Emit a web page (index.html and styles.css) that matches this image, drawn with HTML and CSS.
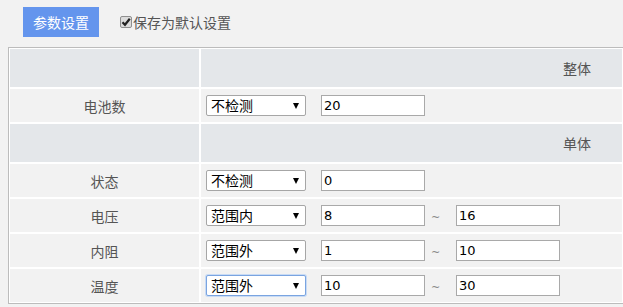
FILE: index.html
```html
<!DOCTYPE html>
<html lang="zh-CN">
<head>
<meta charset="utf-8">
<title>参数设置</title>
<link rel="stylesheet" href="styles.css">
</head>
<body>
<div class="toolbar">
  <button class="btn-primary" type="button">参数设置</button>
  <label class="check">
    <span class="check-box">
      <input type="checkbox" checked>
      <svg class="check-mark" viewBox="0 0 12 12" width="12" height="12"><path d="M2.5 6.2 L5 8.8 L9.8 2.8" fill="none" stroke="#222" stroke-width="2.2"/></svg>
    </span>保存为默认设置
  </label>
</div>
<table class="grid">
  <tr class="group">
    <td class="label-col"></td>
    <td class="group-title">整体</td>
  </tr>
  <tr class="row">
    <td class="label">电池数</td>
    <td class="field"><span class="sel"><select><option>不检测</option></select></span><input class="num" type="text" value="20"></td>
  </tr>
  <tr class="group">
    <td class="label-col"></td>
    <td class="group-title">单体</td>
  </tr>
  <tr class="row">
    <td class="label">状态</td>
    <td class="field"><span class="sel"><select><option>不检测</option></select></span><input class="num" type="text" value="0"></td>
  </tr>
  <tr class="row">
    <td class="label">电压</td>
    <td class="field"><span class="sel"><select><option>范围内</option></select></span><input class="num" type="text" value="8"><span class="tilde">~</span><input class="num" type="text" value="16"></td>
  </tr>
  <tr class="row">
    <td class="label">内阻</td>
    <td class="field"><span class="sel"><select><option>范围外</option></select></span><input class="num" type="text" value="1"><span class="tilde">~</span><input class="num" type="text" value="10"></td>
  </tr>
  <tr class="row">
    <td class="label">温度</td>
    <td class="field"><span class="sel sel-focus"><select><option>范围外</option></select></span><input class="num" type="text" value="10"><span class="tilde">~</span><input class="num" type="text" value="30"></td>
  </tr>
</table>
</body>
</html>
```
FILE: styles.css
```css
html, body {
  margin: 0;
  padding: 0;
  overflow: hidden;
  background: #f2f2f2;
  font-family: "Microsoft YaHei", "Noto Sans CJK SC", "Noto Sans", sans-serif;
  font-size: 14px;
  color: #555;
}

.toolbar {
  height: 47px;
  box-sizing: border-box;
  padding: 7px 0 0 23px;
  display: flex;
  align-items: flex-start;
}

.btn-primary {
  width: 76px;
  height: 30px;
  border: 0;
  margin: 0;
  padding: 0;
  background: #6495ed;
  color: #fff;
  font-family: inherit;
  font-size: 14px;
  line-height: 30px;
}

.check {
  margin-left: 21px;
  margin-top: 7px;
  display: flex;
  align-items: center;
  height: 16px;
  line-height: 16px;
  color: #555;
}

.check-box {
  position: relative;
  width: 12px;
  height: 12px;
  margin-right: 1px;
}

.check-box input {
  appearance: none;
  -webkit-appearance: none;
  margin: 0;
  width: 12px;
  height: 12px;
  box-sizing: border-box;
  border: 1px solid #8f8f8f;
  border-radius: 2px;
  background: #dcdcdc;
  display: block;
}

.check-mark {
  position: absolute;
  left: 0;
  top: 0;
}

.grid {
  margin-left: 8px;
  width: 616px;
  table-layout: fixed;
  border-collapse: separate;
  border-spacing: 0;
  border: 1px solid #bcbcbc;
}

.grid td {
  border: 1px solid #fff;
  padding: 0;
  vertical-align: middle;
}

.grid td:first-child {
  width: 189px;
}

.group {
  height: 40px;
  background: #e4e7ea;
}

.row {
  height: 35px;
}

.group-title {
  text-align: right;
  padding-right: 31px !important;
  color: #555;
}

.label {
  text-align: center;
  color: #555;
}

.field {
  padding-left: 5px !important;
  white-space: nowrap;
  font-size: 0;
}

.sel {
  position: relative;
  display: inline-block;
  vertical-align: middle;
}

.sel::after {
  content: "";
  position: absolute;
  right: 7px;
  top: 8px;
  border-left: 3.5px solid transparent;
  border-right: 3.5px solid transparent;
  border-top: 6px solid #000;
}

.sel select {
  appearance: none;
  -webkit-appearance: none;
  width: 100px;
  height: 21px;
  box-sizing: border-box;
  margin: 0;
  padding: 0 0 0 4px;
  border: 1px solid #a6a6a6;
  border-radius: 2px;
  background: #fff;
  color: #000;
  font-family: "Microsoft YaHei", "Noto Sans CJK SC", sans-serif;
  font-size: 14px;
  line-height: 19px;
  display: block;
}

.sel-focus select {
  border-color: #7aa4e0;
  box-shadow: 0 0 0 1px #c8dbf5;
}

.num {
  width: 104px;
  height: 21px;
  box-sizing: border-box;
  margin: 0 0 0 15px;
  padding: 0 2px;
  border: 1px solid #a9a9a9;
  background: #fff;
  color: #000;
  font-family: "DejaVu Sans", Verdana, sans-serif;
  font-size: 13px;
  line-height: 19px;
  vertical-align: middle;
}

.tilde {
  display: inline-block;
  width: 31px;
  box-sizing: border-box;
  padding: 3px 0 0 6px;
  text-align: left;
  font-family: "DejaVu Sans", sans-serif;
  font-size: 11px;
  color: #888;
  vertical-align: middle;
}

.tilde + .num {
  margin-left: 0;
}
```
